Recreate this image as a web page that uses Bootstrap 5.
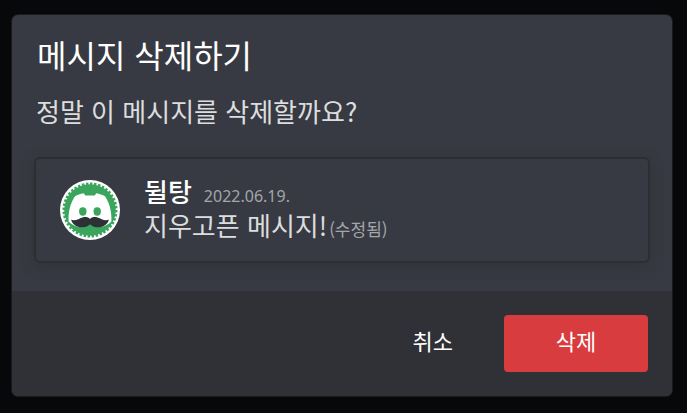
<!DOCTYPE html>
<html lang="ko">
<head>
<meta charset="utf-8">
<meta name="viewport" content="width=device-width, initial-scale=1">
<title>메시지 삭제하기</title>
<link href="https://cdn.jsdelivr.net/npm/bootstrap@5.3.0/dist/css/bootstrap.min.css" rel="stylesheet">
<style>
  body { background: #07080a; color: #dcddde; font-family: "Noto Sans CJK KR", sans-serif; }
  .backdrop { padding: 15px 15px 16px 12px; }
  .confirm-box { background: #373a42; border-radius: 6px; box-shadow: 0 0 0 1px #191a1d; overflow: hidden; color: inherit; }
  .confirm-main { padding: 17px 22px 28px; }
  .confirm-title { font-size: 32px; line-height: 44px; font-weight: 400; color: #fff; padding-left: 3px; }
  .confirm-text { font-size: 26px; line-height: 36px; margin: 17px 0 28px; padding-left: 2px; }
  .message { border: 2px solid #2c2e33; border-radius: 6px; padding: 17px 24px; gap: 24px; box-shadow: 0 3px 14px rgba(40, 43, 40, .4); }
  .avatar { width: 60px; height: 60px; }
  .message-body { padding-bottom: 2px; margin-top: -2px; }
  .message-line { font-size: 26px; line-height: 34px; }
  .author { font-weight: 500; color: #fff; }
  .date { font-family: "Noto Sans", sans-serif; font-size: 16px; line-height: 16px; color: #a3a6aa; margin-left: 12px; }
  .edited { font-size: 17px; line-height: 17px; color: #a3a6aa; margin-left: 2px; }
  .confirm-actions { background: #303136; padding: 24px; }
  .confirm-actions .btn { --bs-btn-color: #fff; --bs-btn-hover-color: #fff; font-size: 22px; line-height: 30px; height: 57px; border: 0; border-radius: 4px; padding: 0 51px 8px; }
  .btn-remove { --bs-btn-bg: #d83c3e; --bs-btn-hover-bg: #b93335; width: 144px; }
</style>
</head>
<body>
<main class="backdrop min-vh-100">
  <section class="confirm-box" role="dialog" aria-labelledby="confirm-title">
    <div class="confirm-main">
      <h1 class="confirm-title mb-0" id="confirm-title">메시지 삭제하기</h1>
      <p class="confirm-text">정말 이 메시지를 삭제할까요?</p>
      <article class="message d-flex align-items-center">
        <svg class="avatar flex-shrink-0" viewBox="0 0 60 60" aria-hidden="true">
          <circle cx="30" cy="30" r="30" fill="#fff"/>
          <circle cx="30" cy="30" r="25.8" fill="#3ba55d"/>
          <circle cx="30" cy="30" r="26" fill="none" stroke="#3ba55d" stroke-width="3" pathLength="80" stroke-dasharray="1.2 .8"/>
          <path fill="#fff" d="M23.800 13.200c-3.400.5-6.500 1.600-8.800 3C10.300 23.500 8.200 31.200 8.600 41.500c2.800 2.800 6.400 4.600 10.600 5.500l2.600-3h16.400l2.600 3c4.200-.9 7.800-2.700 10.600-5.500.4-10.300-1.700-18-6.400-25.300-2.300-1.400-5.400-2.500-8.800-3l-1.400 2.300H25.200z"/>
          <ellipse cx="22.800" cy="31.500" rx="3.700" ry="4.200" fill="#3ba55d"/>
          <ellipse cx="37.200" cy="31.500" rx="3.700" ry="4.200" fill="#3ba55d"/>
          <path fill="#2d3035" d="M30 39c-1.800-1.900-4.500-2.400-7.500-1.500-4 1.200-6.500 3.800-11.400 2.300 1.500 5.200 6.400 8 11.900 7.500 3.200-.3 5.700-1.400 7-3 1.300 1.600 3.800 2.700 7 3 5.500.5 10.400-2.300 11.900-7.500-4.900 1.500-7.400-1.100-11.400-2.300-3-.9-5.700-.4-7.500 1.500z"/>
        </svg>
        <div class="message-body">
          <div class="message-line"><span class="author">뒬탕</span><time class="date" datetime="2022-06-19">2022.06.19.</time></div>
          <div class="message-line">지우고픈 메시지!<small class="edited">(수정됨)</small></div>
        </div>
      </article>
    </div>
    <div class="confirm-actions d-flex justify-content-end">
      <button type="button" class="btn">취소</button>
      <button type="button" class="btn btn-remove">삭제</button>
    </div>
  </section>
</main>
<script src="https://cdn.jsdelivr.net/npm/bootstrap@5.3.0/dist/js/bootstrap.bundle.min.js"></script>
</body>
</html>
